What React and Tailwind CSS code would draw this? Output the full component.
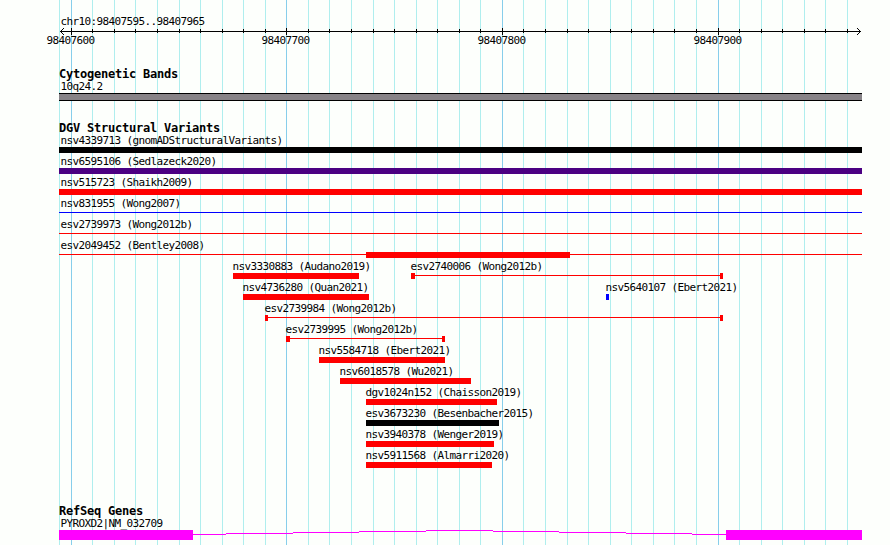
import React from 'react';

const WIDTH = 890;
const HEIGHT = 545;
const LEFT = 59;
const RIGHT = 862;

const RED = '#ff0000';
const BLACK = '#000000';
const BLUE = '#0000ff';
const INDIGO = '#4b0082';
const MAGENTA = '#ff00ff';

// one grid line every 10 bp, the first one is 98407600
const TICKS = Array.from({ length: 37 }, (_, i) => ({
  x: Math.floor(71.22 + i * 21.56),
  major: i % 10 === 0,
  label: String(98407600 + i * 10),
}));

// blocks are [start, end] in pixels, line is the thin connector
const VARIANTS = [
  [{ name: 'nsv4339713 (gnomADStructuralVariants)', x: 60, color: BLACK, blocks: [[LEFT, RIGHT]] }],
  [{ name: 'nsv6595106 (Sedlazeck2020)', x: 60, color: INDIGO, blocks: [[LEFT, RIGHT]] }],
  [{ name: 'nsv515723 (Shaikh2009)', x: 60, color: RED, blocks: [[LEFT, RIGHT]] }],
  [{ name: 'nsv831955 (Wong2007)', x: 60, color: BLUE, line: [LEFT, RIGHT], blocks: [] }],
  [{ name: 'esv2739973 (Wong2012b)', x: 60, color: RED, line: [LEFT, RIGHT], blocks: [] }],
  [{ name: 'esv2049452 (Bentley2008)', x: 60, color: RED, line: [LEFT, RIGHT], blocks: [[366, 570]] }],
  [
    { name: 'nsv3330883 (Audano2019)', x: 232, color: RED, blocks: [[233, 359]] },
    { name: 'esv2740006 (Wong2012b)', x: 410, color: RED, line: [411, 723], blocks: [[411, 415], [720, 723]] },
  ],
  [
    { name: 'nsv4736280 (Quan2021)', x: 242, color: RED, blocks: [[243, 369]] },
    { name: 'nsv5640107 (Ebert2021)', x: 605, color: BLUE, blocks: [[606, 609]] },
  ],
  [{ name: 'esv2739984 (Wong2012b)', x: 264, color: RED, line: [265, 723], blocks: [[265, 268], [720, 723]] }],
  [{ name: 'esv2739995 (Wong2012b)', x: 285, color: RED, line: [286, 445], blocks: [[286, 290], [442, 445]] }],
  [{ name: 'nsv5584718 (Ebert2021)', x: 318, color: RED, blocks: [[319, 445]] }],
  [{ name: 'nsv6018578 (Wu2021)', x: 339, color: RED, blocks: [[340, 471]] }],
  [{ name: 'dgv1024n152 (Chaisson2019)', x: 365, color: RED, blocks: [[366, 497]] }],
  [{ name: 'esv3673230 (Besenbacher2015)', x: 365, color: BLACK, blocks: [[366, 499]] }],
  [{ name: 'nsv3940378 (Wenger2019)', x: 365, color: RED, blocks: [[366, 494]] }],
  [{ name: 'nsv5911568 (Almarri2020)', x: 365, color: RED, blocks: [[366, 492]] }],
];

// the intron climbs one pixel per step and comes back down
const INTRON = [
  [193, 226, 4],
  [226, 293, 3],
  [293, 359, 2],
  [359, 426, 1],
  [426, 493, 0],
  [493, 559, 1],
  [559, 626, 2],
  [626, 692, 3],
  [692, 726, 4],
];

function GridLines() {
  return (
    <svg className="absolute inset-0" width={WIDTH} height={HEIGHT} shapeRendering="crispEdges">
      <rect x={LEFT} y="0" width="1" height={HEIGHT} fill="#afeeee" />
      {TICKS.map(tick => (
        <rect key={tick.x} x={tick.x} y="0" width="1" height={HEIGHT} fill={tick.major ? '#87ceeb' : '#afeeee'} />
      ))}
    </svg>
  );
}

function Label({ x, children }) {
  return (
    <div
      className="col-start-1 row-start-1 h-3.5 justify-self-start pl-[0.5px] text-[11px] leading-4 tracking-[-0.622px] whitespace-pre"
      style={{ marginLeft: x }}
    >
      {children}
    </div>
  );
}

function Heading({ children }) {
  return (
    <h2 className="ml-[59px] h-3 text-[12px] leading-[14px] font-bold tracking-[-0.224px] whitespace-pre">
      {children}
    </h2>
  );
}

function Ruler() {
  return (
    <div>
      <svg className="block" width={WIDTH} height="7" shapeRendering="crispEdges">
        <rect x="60" y="3" width="801" height="1" />
        {TICKS.map(tick => (
          <rect key={tick.x} x={tick.x} y={tick.major ? 0 : 1} width="1" height={tick.major ? 7 : 4} />
        ))}
        {[1, 2, 3].map(d => (
          <g key={d}>
            <rect x={60 + d} y={3 - d} width="1" height="1" />
            <rect x={60 + d} y={3 + d} width="1" height="1" />
            <rect x={860 - d} y={3 - d} width="1" height="1" />
            <rect x={860 - d} y={3 + d} width="1" height="1" />
          </g>
        ))}
      </svg>
      <div className="-mt-[2px] grid">
        {TICKS.filter(tick => tick.major).map(tick => (
          <Label key={tick.x} x={tick.x - 25}>{tick.label}</Label>
        ))}
      </div>
    </div>
  );
}

function Feature({ feature }) {
  const { name, x, color, line, blocks } = feature;
  return (
    <>
      <Label x={x}>{name}</Label>
      {line && (
        <div
          className="col-start-1 row-start-2 mt-0.5 h-px"
          style={{ marginLeft: line[0], width: line[1] - line[0], backgroundColor: color }}
        />
      )}
      {blocks.map(([start, end]) => (
        <div
          key={start}
          className="col-start-1 row-start-2 h-1.5"
          style={{ marginLeft: start, width: end - start, backgroundColor: color }}
        />
      ))}
    </>
  );
}

function GeneModel() {
  return (
    <svg className="block" width={WIDTH} height="10" fill={MAGENTA} shapeRendering="crispEdges">
      <rect x={LEFT} y="0" width="134" height="10" />
      <rect x="726" y="0" width="136" height="10" />
      {INTRON.map(([start, end, y]) => (
        <rect key={start} x={start} y={y} width={end - start} height="1" />
      ))}
    </svg>
  );
}

export default function App() {
  return (
    <div className="relative h-[545px] w-[890px] overflow-hidden bg-[#fdfffc] font-['DejaVu_Sans_Mono',monospace] text-black">
      <GridLines />
      <div className="relative flex flex-col pt-3.5">
        <Label x={60}>chr10:98407595..98407965</Label>
        <Ruler />

        <section className="mt-5">
          <Heading>Cytogenetic Bands</Heading>
          <Label x={60}>10q24.2</Label>
          <div className="ml-[59px] h-2 w-[803px] border-y border-black bg-[#878387]" />
        </section>

        <section className="mt-5">
          <Heading>DGV Structural Variants</Heading>
          {VARIANTS.map(row => (
            <div key={row[0].name} className="grid h-[21px] grid-cols-1 grid-rows-[14px_7px]">
              {row.map(feature => (
                <Feature key={feature.name} feature={feature} />
              ))}
            </div>
          ))}
        </section>

        <section className="mt-[35px]">
          <Heading>RefSeq Genes</Heading>
          <Label x={60}>PYROXD2|NM_032709</Label>
          <GeneModel />
        </section>
      </div>
    </div>
  );
}
